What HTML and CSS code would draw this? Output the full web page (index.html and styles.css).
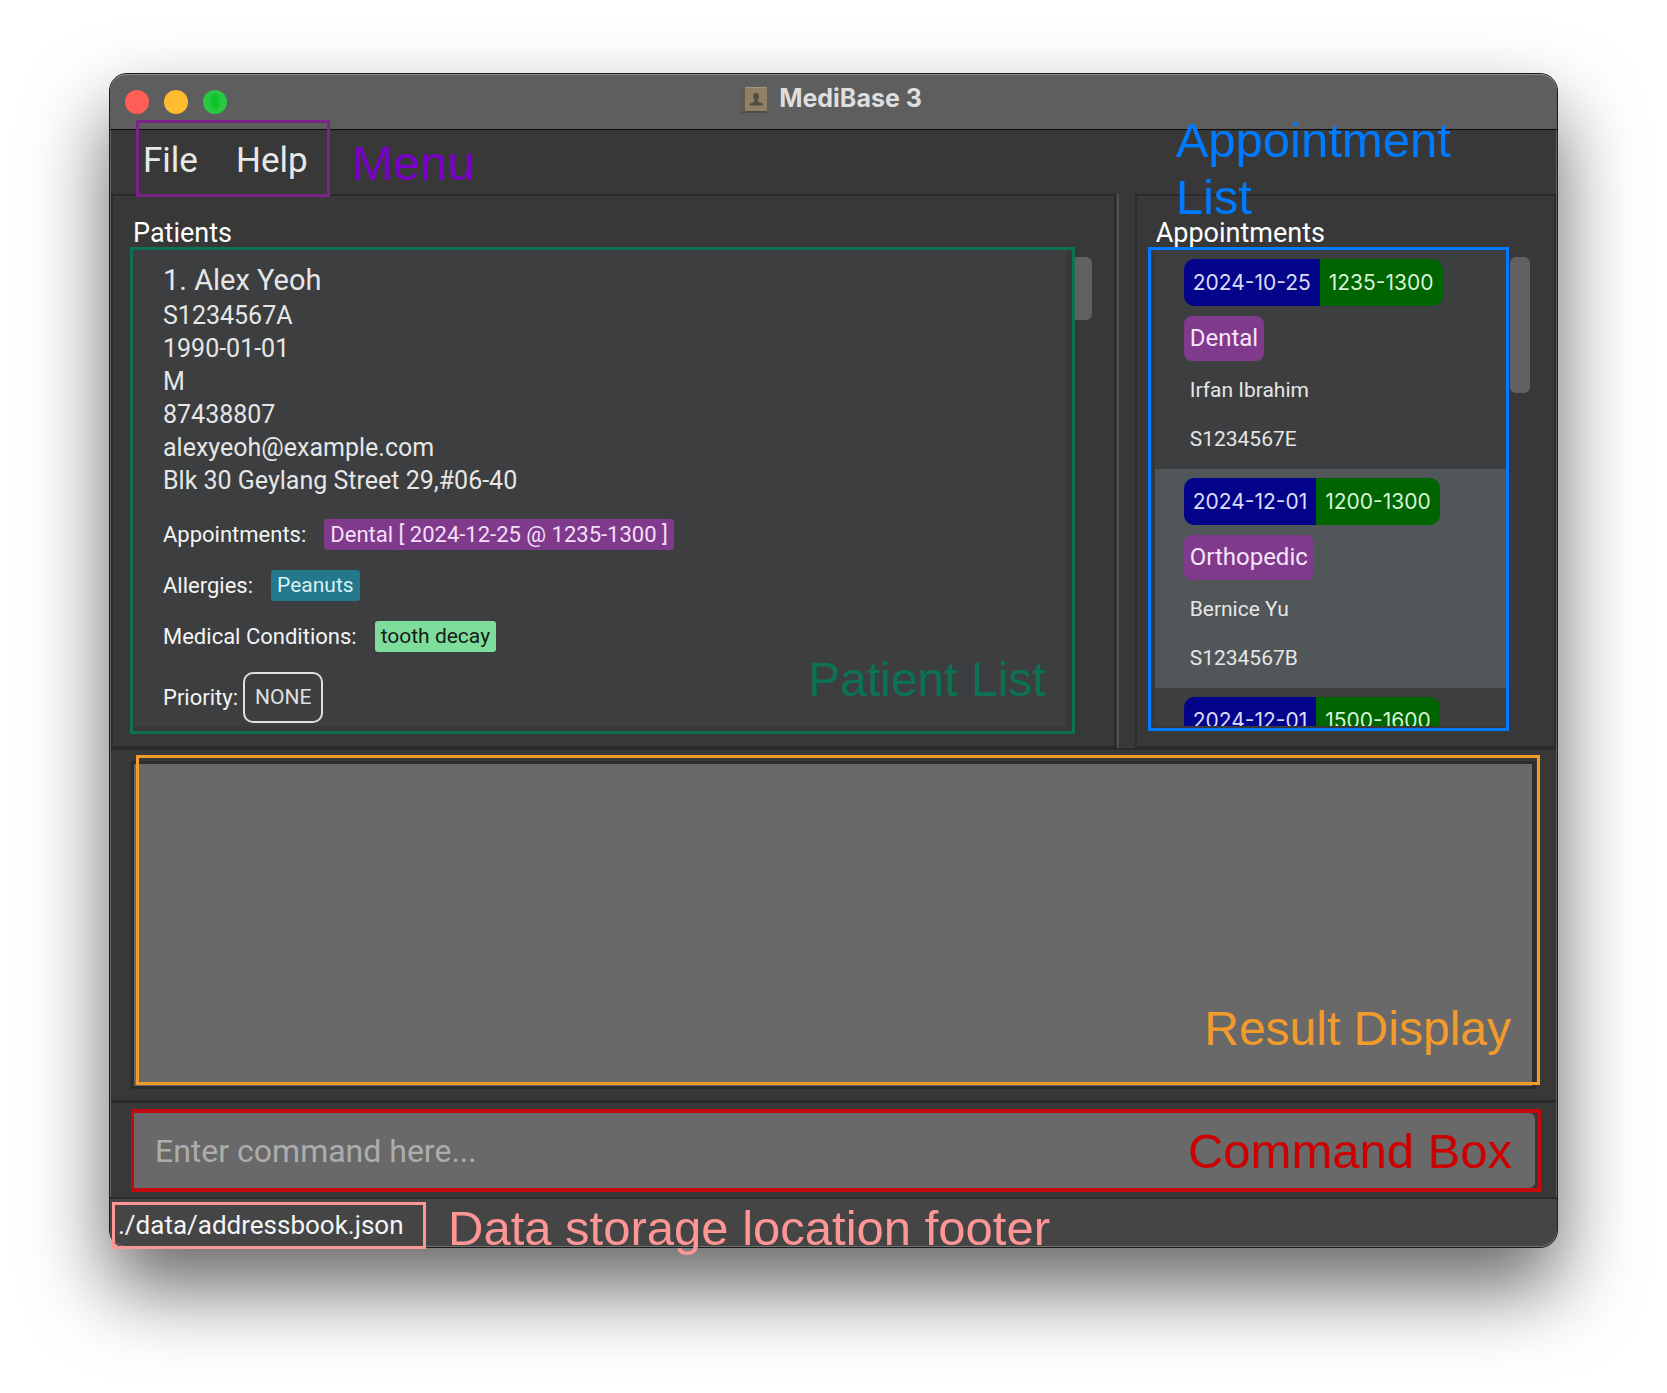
FILE: index.html
```html
<!DOCTYPE html>
<html lang="en">
<head>
<meta charset="utf-8">
<title>MediBase 3</title>
<link rel="stylesheet" href="styles.css">
</head>
<body>
<div class="window">
  <header class="titlebar">
    <div class="lights">
      <button class="light light-close" aria-label="Close"></button>
      <button class="light light-min" aria-label="Minimise"></button>
      <button class="light light-max" aria-label="Zoom"></button>
    </div>
    <h1 class="title">
      <svg class="title-icon" viewBox="0 0 27 26" aria-hidden="true">
        <rect x="0" y="1" width="26" height="25" rx="1" fill="#4f4a42"/>
        <rect x="0" y="1" width="4" height="24" fill="#675949"/>
        <rect x="4" y="0" width="22" height="24" rx="1" fill="#8f8065"/>
        <path d="M4 .5h22" stroke="#a3967c"/>
        <path d="M15 6c2 0 3 1.500 3 3.500 0 1.500-.700 2.500-1.200 3.200v1.800c1.600 1 5.200 1.200 5.200 4H8.500c0-2.800 3.400-3 5-4v-1.800c-.700-.700-1.300-1.700-1.300-3.200C12.200 7.500 13 6 15 6z" fill="#534c3d"/>
      </svg>
      MediBase 3
    </h1>
  </header>

  <nav class="menubar">
    <button class="menu">File</button>
    <button class="menu">Help</button>
    <span class="note note-menu">Menu</span>
  </nav>

  <main class="panels">
    <section class="panel patients">
      <h2 class="heading">Patients</h2>
      <div class="scroller">
        <div class="frame frame-patients">
          <article class="patient">
            <h3 class="name">1. Alex Yeoh</h3>
            <p class="detail">S1234567A</p>
            <p class="detail">1990-01-01</p>
            <p class="detail">M</p>
            <p class="detail">87438807</p>
            <p class="detail">alexyeoh@example.com</p>
            <p class="detail">Blk 30 Geylang Street 29,#06-40</p>
            <div class="fields">
              <p class="field">Appointments: <span class="tag tag-appt">Dental [ 2024-12-25 @ 1235-1300 ]</span></p>
              <p class="field">Allergies: <span class="tag tag-allergy">Peanuts</span></p>
              <p class="field">Medical Conditions: <span class="tag tag-cond">tooth decay</span></p>
              <p class="field field-priority">Priority: <span class="priority">NONE</span></p>
            </div>
          </article>
          <span class="note note-patients">Patient List</span>
        </div>
        <div class="thumb thumb-patients"></div>
      </div>
    </section>

    <div class="splitter"></div>

    <section class="panel appointments">
      <span class="note note-appts">Appointment List</span>
      <h2 class="heading">Appointments</h2>
      <div class="scroller">
        <div class="frame frame-appts">
          <ul class="appt-list">
            <li class="appt">
              <div class="slot"><span class="date">2024-10-25</span><span class="time">1235-1300</span></div>
              <span class="kind">Dental</span>
              <p class="who">Irfan Ibrahim</p>
              <p class="who">S1234567E</p>
            </li>
            <li class="appt appt-alt">
              <div class="slot"><span class="date">2024-12-01</span><span class="time">1200-1300</span></div>
              <span class="kind">Orthopedic</span>
              <p class="who">Bernice Yu</p>
              <p class="who">S1234567B</p>
            </li>
            <li class="appt">
              <div class="slot"><span class="date">2024-12-01</span><span class="time">1500-1600</span></div>
            </li>
          </ul>
        </div>
        <div class="thumb thumb-appts"></div>
      </div>
    </section>
  </main>

  <section class="result">
    <textarea class="result-box" aria-label="Result display" readonly></textarea>
    <div class="result-mark"></div>
    <span class="note note-result">Result Display</span>
  </section>

  <section class="command">
    <div class="frame-command">
      <input class="command-input" type="text" aria-label="Command" placeholder="Enter command here...">
      <span class="note note-command">Command Box</span>
    </div>
  </section>

  <footer class="statusbar">
    <span class="path">./data/addressbook.json</span>
    <span class="note note-footer">Data storage location footer</span>
  </footer>
</div>
</body>
</html>
```
FILE: styles.css
```css
*, *::before { box-sizing: border-box; }

body {
  margin: 0;
  min-height: 100vh;
  padding: 73px 109px 145px;
  display: flex;
  background: #fff;
  color: #e6e6e6;
  font-family: Roboto, "Liberation Sans", sans-serif;
}

h1, h2, h3, p, ul { margin: 0; padding: 0; font-weight: 400; }
ul { list-style: none; }
button, input, textarea { font-family: inherit; }

.window {
  flex: 1;
  min-width: 0;
  display: flex;
  flex-direction: column;
  background: #383838;
  border: 1px solid #1c1c1c;
  border-radius: 18px;
  box-shadow: 0 40px 80px rgba(0, 0, 0, 0.6), inset 0 0 0 1px #626262;
}

/* Title bar */
.titlebar {
  position: relative;
  height: 56px;
  display: flex;
  align-items: center;
  justify-content: center;
  background: #5e5e5e;
  border-bottom: 1px solid #0c0c0c;
  border-radius: 17px 17px 0 0;
  box-shadow: inset 0 1px 0 #8c8c8c;
}
.lights { position: absolute; left: 15px; top: 16px; display: flex; gap: 15px; }
.light { width: 24px; height: 24px; padding: 0; border: 0; border-radius: 50%; }
.light-close { background: #ff5f57; }
.light-min { background: #febc2e; }
.light-max { background: radial-gradient(ellipse 6px 10px, #10c42c 60%, #28c840 100%); }
.title {
  display: flex;
  align-items: center;
  gap: 11px;
  padding: 0 4px 7px 0;
  font: 700 25px/30px Inter, sans-serif;
  color: #dedede;
}
.title-icon { width: 27px; height: 26px; margin-top: 3px; }

/* Menu */
.menubar { position: relative; height: 64px; display: flex; align-items: center; gap: 38px; padding: 0 0 2px 33px; }
.menubar::before {
  content: "";
  position: absolute;
  left: 26px;
  top: -10px;
  width: 194px;
  height: 77px;
  border: 3px solid #7a2487;
  z-index: 1;
}
.menu { padding: 0; border: 0; background: none; color: #e8e8e8; font-size: 35px; line-height: 40px; }

/* Callout captions */
.note { position: absolute; z-index: 2; font: 49px/57px "Liberation Sans", Arial, sans-serif; white-space: nowrap; }
.note-menu { left: 242px; top: 5px; color: #7a00cc; }
.note-patients { right: 26px; bottom: 23px; color: #0b7253; font-size: 48px; }
.note-appts { left: 39px; top: -84px; width: 300px; color: #007aff; white-space: normal; }
.note-result { right: 45px; bottom: 43px; color: #f29b2c; font-size: 48px; }
.note-command { right: 26px; top: 10px; color: #cc0000; }
.note-footer { left: 338px; top: 1px; color: #ff9696; }

/* Two list panels */
.panels { display: grid; grid-template-columns: 31fr 19px 13fr; margin: 0 1px; }
.panel { position: relative; min-width: 0; display: flex; flex-direction: column; border: 2px solid #2b2b2b; }
.patients { padding: 23px 22px 12px 17px; }
.appointments { padding: 23px 24px 12px 11px; }
.splitter { margin-left: 1px; border-left: 2px solid #505050; }
.heading { padding-left: 3px; font-size: 27px; line-height: 28px; color: #fff; }
.appointments .heading { padding-left: 8px; }
.scroller { flex: 1; display: flex; }
.frame { position: relative; flex: 1; min-width: 0; display: flex; border: 3px solid; }
.frame-patients { border-color: #0b7253; padding: 0 6px 5px 0; }
.frame-appts { border-color: #007aff; padding: 0 0 2px 4px; margin-bottom: 3px; }
.thumb { margin-top: 10px; background: #616161; }
.thumb-patients { width: 17px; height: 63px; border-radius: 0 6px 6px 0; }
.thumb-appts { width: 20px; height: 136px; margin-left: 1px; border-radius: 6px; }

/* Patient card */
.patient { flex: 1; padding: 11px 0 3px 30px; background: #3c3e3f; }
.name { font-size: 29px; line-height: 38px; }
.detail { font-size: 25px; line-height: 33px; }
.fields { display: flex; flex-direction: column; gap: 20px; margin-top: 22px; }
.field { display: flex; align-items: center; gap: 18px; font-size: 22px; line-height: 31px; color: #f4f4f4; }
.field-priority { gap: 5px; }
.tag { padding: 0 6px; border-radius: 3px; font-size: 21px; }
.tag-appt { background: #7f3a8c; color: #f6dff8; font-size: 22px; }
.tag-allergy { background: #23788c; color: #d8f0f5; }
.tag-cond { background: #7fdd9c; color: #142018; }
.priority { padding: 8px 10px; border: 2px solid #e0e0e0; border-radius: 10px; color: #e0e0e0; font-size: 21px; }

/* Appointment rows */
.appt-list { flex: 1; contain: size; overflow: hidden; background: #3c3e3f; }
.appt { padding: 9px 0 5px 29px; }
.appt-alt { background: #515658; }
.slot { display: flex; margin-bottom: 10px; font: 21px/47px Inter, sans-serif; }
.date { padding: 0 9px; border-radius: 10px 0 0 10px; background: #04048b; color: #dcdcf8; }
.time { padding: 0 9px; border-radius: 0 10px 10px 0; background: #006400; color: #d4f4d4; }
.kind {
  display: table;
  margin-bottom: 5px;
  padding: 0 6px;
  border-radius: 8px;
  background: #7f3a8c;
  color: #f8e4fa;
  font-size: 24px;
  line-height: 45px;
}
.who { padding-left: 6px; font-size: 21px; line-height: 49px; }

/* Result */
.result { position: relative; flex: 1; display: flex; margin: 0 1px; padding: 11px 20px; border-top: 2px solid #2b2b2b; }
.result-box { flex: 1; resize: none; border: 3px solid #2d2d2d; border-right-width: 4px; background: #696969; color: #fff; outline: 0; }
.result-mark { position: absolute; inset: 5px 16px 15px 25px; border: 3px solid #f29b2c; }

/* Command */
.command { margin: 0 1px; padding: 6px 15px 5px 20px; border-top: 3px solid #2a2a2a; }
.frame-command { position: relative; display: flex; padding-right: 3px; border: 4px solid #c40a0e; border-left-width: 3px; border-right-width: 3px; }
.command-input {
  flex: 1;
  height: 75px;
  padding: 0 21px;
  border: 0;
  border-radius: 0 6px 6px 0;
  background: #696969;
  color: #fff;
  font-size: 32px;
}
.command-input::placeholder { color: #adadad; opacity: 1; }

/* Footer */
.statusbar {
  position: relative;
  height: 50px;
  padding: 3px 2px 0;
  background: #454545;
  border-top: 2px solid #2c2c2c;
  border-radius: 0 0 17px 17px;
  box-shadow: inset 0 -1px 0 #707070;
}
.path {
  display: block;
  width: 314px;
  height: 47px;
  padding-left: 3px;
  border: 3px solid #ff9696;
  color: #f4f4f4;
  font-size: 26px;
  line-height: 40px;
}
```
